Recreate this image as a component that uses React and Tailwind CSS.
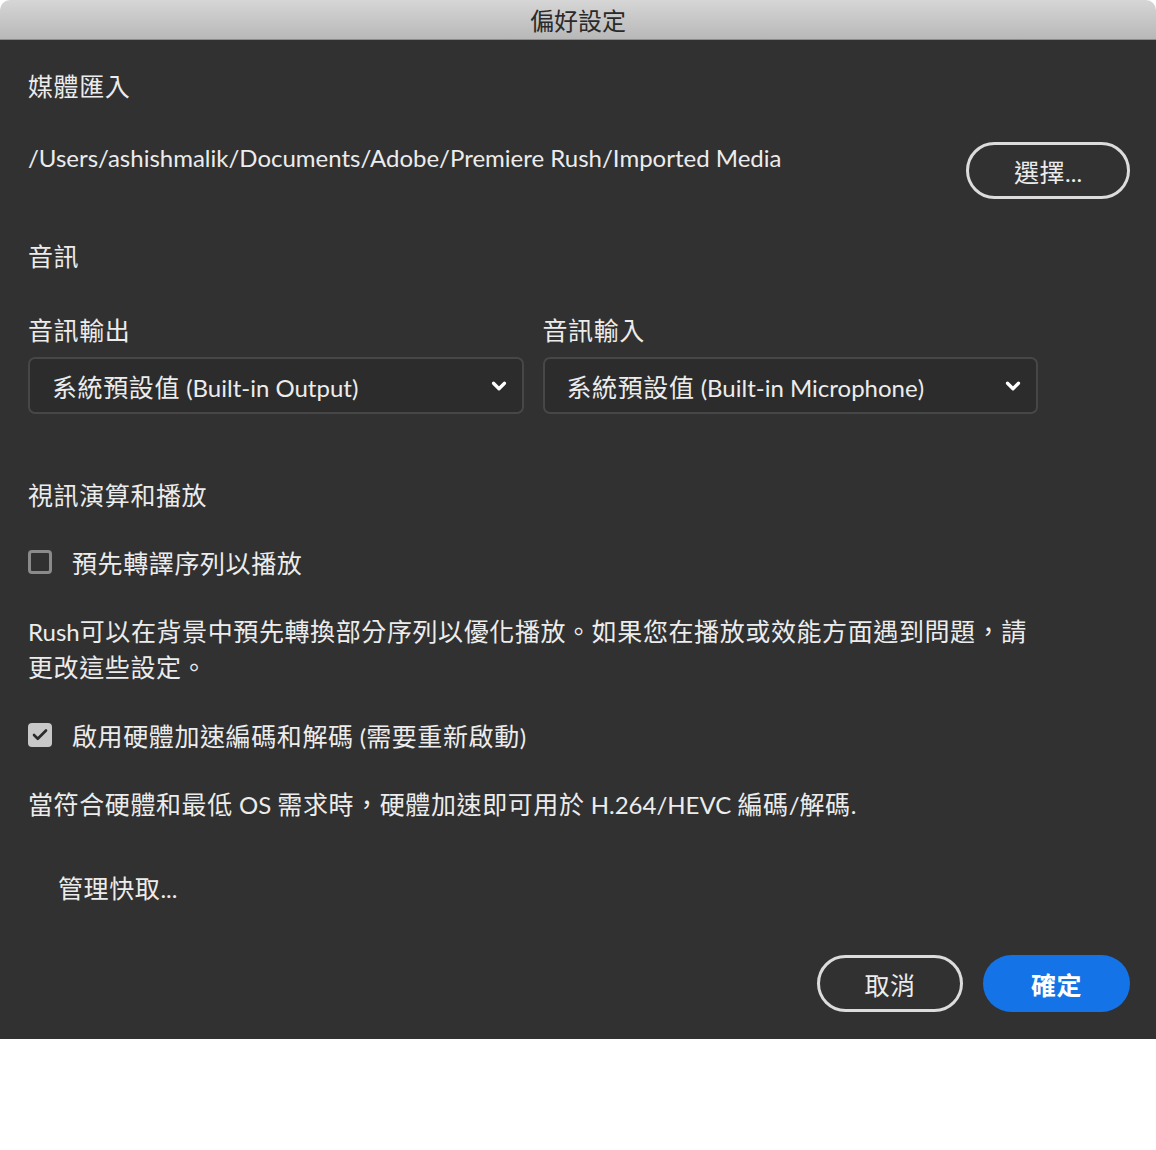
import React from 'react';
import { ChevronDown, Check } from 'lucide-react';

const font = { fontFamily: '"Noto Sans CJK TC", "Noto Sans", sans-serif' };

// Latin runs use Lato, CJK runs keep the CJK face
function Mix({ text }) {
    const parts = text.split(/([\u3000-\u9fff\uff00-\uffef]+)/);
    return parts.map((p, i) =>
        i % 2 === 1 ? (
            <span key={i}>{p}</span>
        ) : p ? (
            <span key={i} className="font-['Lato'] text-[24px] leading-none tracking-normal">{p}</span>
        ) : null
    );
}

function Select({ label, value }) {
    return (
        <div className="flex-1 min-w-0">
            <div className="leading-[34px]">{label}</div>
            <div className="mt-[11px] h-[57px] flex items-center justify-between pl-[22px] pr-[12px] bg-[#2c2c2c] border-2 border-[#474747] rounded-[7px]">
                <span className="leading-[34px]"><Mix text={value} /></span>
                <ChevronDown size={22} strokeWidth={3.5} className="text-white" />
            </div>
        </div>
    );
}

export default function App() {
    return (
        <div className="w-[1156px] min-h-[1150px] bg-white" style={font}>
            <div className="w-full rounded-t-[10px] overflow-hidden">
                {/* Title bar */}
                <div className="h-10 flex items-center justify-center bg-gradient-to-b from-[#d6d6d6] to-[#b8b8b8] border-b border-[#8c8c8c]">
                    <span className="text-[24px] text-[#2a2a2a]">偏好設定</span>
                </div>

                {/* Body */}
                <div className="bg-[#313131] px-[28px] pt-[28px] pb-[27px] text-[#ececec] text-[25px] tracking-[0.6px]">
                    <div className="leading-[34px]">媒體匯入</div>

                    <div className="mt-[37px] flex justify-between items-start -mr-[2px]">
                        <span className="leading-[34px]"><Mix text="/Users/ashishmalik/Documents/Adobe/Premiere Rush/Imported Media" /></span>
                        <button className="mt-[3px] w-[164px] h-[57px] rounded-full border-[3px] border-[#dcdcdc] leading-[34px]">
                            <Mix text="選擇..." />
                        </button>
                    </div>

                    <div className="mt-[39px] leading-[34px]">音訊</div>

                    <div className="mt-[40px] flex gap-[19px] w-[1010px]">
                        <Select label="音訊輸出" value="系統預設值 (Built-in Output)" />
                        <Select label="音訊輸入" value="系統預設值 (Built-in Microphone)" />
                    </div>

                    <div className="mt-[63px] leading-[34px]">視訊演算和播放</div>

                    <div className="mt-[34px] flex items-center gap-[20px]">
                        <div className="w-[24px] h-[24px] rounded-[4px] border-[3px] border-[#8a8a8a]"></div>
                        <span className="leading-[34px]">預先轉譯序列以播放</span>
                    </div>

                    <p className="mt-[33px] w-[1012px] leading-[36px]">
                        <Mix text="Rush可以在背景中預先轉換部分序列以優化播放。如果您在播放或效能方面遇到問題，請更改這些設定。" />
                    </p>

                    <div className="mt-[34px] flex items-center gap-[20px]">
                        <div className="w-[24px] h-[24px] rounded-[4px] bg-[#c8c8c8] flex items-center justify-center">
                            <Check size={18} strokeWidth={3.5} className="text-[#2a2a2a]" />
                        </div>
                        <span className="leading-[34px]"><Mix text="啟用硬體加速編碼和解碼 (需要重新啟動)" /></span>
                    </div>

                    <div className="mt-[34px] leading-[34px]">
                        <Mix text="當符合硬體和最低 OS 需求時，硬體加速即可用於 H.264/HEVC 編碼/解碼." />
                    </div>

                    <div className="mt-[50px] pl-[30px] leading-[34px]"><Mix text="管理快取..." /></div>

                    <div className="mt-[51px] flex justify-end gap-[20px] -mr-[2px]">
                        <button className="w-[146px] h-[57px] rounded-full border-[3px] border-[#dcdcdc] leading-[34px]">
                            取消
                        </button>
                        <button className="w-[147px] h-[57px] rounded-full bg-[#1473e6] text-white font-semibold leading-[34px]">
                            確定
                        </button>
                    </div>
                </div>
            </div>
        </div>
    );
}
